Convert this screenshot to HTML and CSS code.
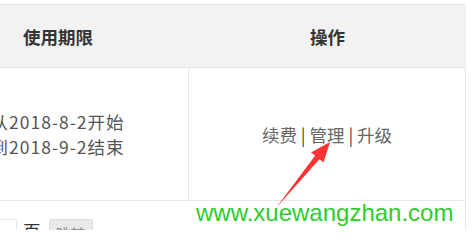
FILE: index.html
```html
<!DOCTYPE html>
<html lang="zh-CN">
<head>
<meta charset="utf-8">
<title>订单</title>
<link rel="stylesheet" href="styles.css">
</head>
<body>
<div class="wrap">
  <div class="grid head">
    <div class="cell th">使用期限</div>
    <div class="cell th">操作</div>
  </div>
  <div class="grid row">
    <div class="cell td first">
      <div class="date">从2018-8-2开始</div>
      <div class="date">到2018-9-2结束</div>
    </div>
    <div class="cell td last">
      <span class="ops">续费 <span class="sep">|</span> 管理 <span class="sep">|</span> 升级</span>
    </div>
  </div>
  <div class="pager">
    <span class="pinput"></span>
    <span class="ptext">页</span>
    <span class="pbtn">跳转</span>
  </div>
</div>
<div class="watermark">www.xuewangzhan.com</div>
<svg class="arrow" width="473" height="230" viewBox="0 0 473 230">
  <polygon points="276,208 315.2,155.4 311,152.4 330,142 323.5,162.6 319.4,159.2" fill="#ff3333"/>
</svg>
</body>
</html>
```

FILE: styles.css
```css
html, body {
  margin: 0;
  padding: 0;
  background: #ffffff;
  overflow: hidden;
}
body {
  width: 473px;
  height: 230px;
  position: relative;
  font-family: "Noto Sans CJK SC", "Noto Sans", sans-serif;
  font-size: 17.5px;
  color: #555;
}
.wrap {
  margin-left: -73px;
  margin-top: 4px;
  width: 539px;
}
.grid {
  display: grid;
  grid-template-columns: 262px 277px;
}
.head {
  background: #f2f2f2;
  border-top: 1px solid #e6e6e6;
  border-bottom: 1px solid #e6e6e6;
  height: 62px;
}
.cell {
  display: flex;
  flex-direction: column;
  align-items: center;
  justify-content: center;
}
.th {
  font-weight: bold;
  color: #333;
}
.row {
  height: 132px;
  border-bottom: 1px solid #e6e6e6;
}
.td.first {
  border-right: 1px solid #e6e6e6;
}
.td.last {
  border-right: 1px solid #e6e6e6;
}
.date {
  line-height: 25px;
  letter-spacing: 1px;
  color: #555;
}
.ops {
  color: #666;
}
.sep {
  color: #444;
}
.pager {
  display: flex;
  align-items: flex-start;
  padding-top: 18px;
  height: 40px;
  border-right: 1px solid #e6e6e6;
  width: 538px;
}
.pinput {
  display: block;
  margin-left: 40px;
  width: 48px;
  height: 30px;
  border: 1px solid #e6e6e6;
  border-radius: 2px;
}
.ptext {
  margin-left: 6px;
  line-height: 24px;
  color: #333;
}
.pbtn {
  margin-left: 8px;
  width: 44px;
  height: 30px;
  line-height: 28px;
  background: #e9e9e9;
  border: 1px solid #dedede;
  box-sizing: border-box;
  border-radius: 2px;
  font-size: 15px;
  color: #888;
  text-align: center;
}
.watermark {
  position: absolute;
  left: 196px;
  top: 198px;
  font-family: "Liberation Sans", Arial, sans-serif;
  font-size: 24px;
  line-height: 30px;
  color: #2ecc2e;
}
.arrow {
  position: absolute;
  left: 0;
  top: 0;
}
```
